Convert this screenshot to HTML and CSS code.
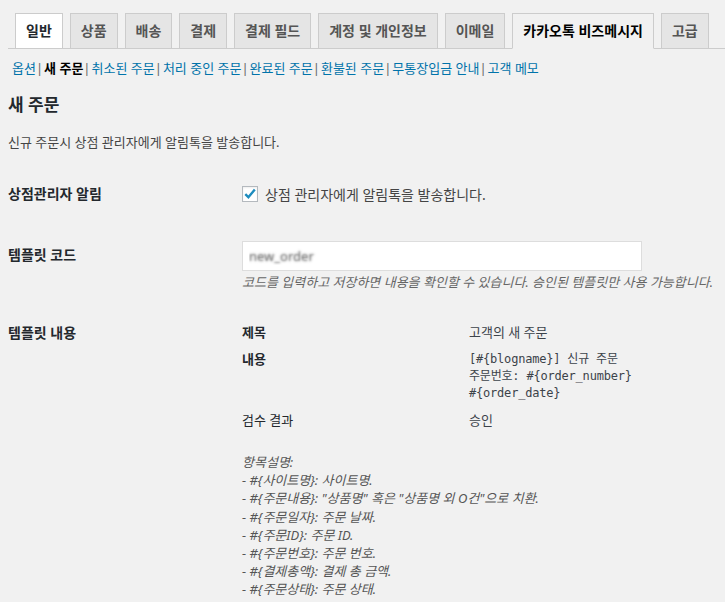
FILE: index.html
```html
<!DOCTYPE html>
<html lang="ko">
<head>
    <meta charset="UTF-8">
    <meta name="viewport" content="width=device-width, initial-scale=1.0">
    <title>카카오톡 비즈메시지 설정</title>
    <link rel="stylesheet" href="styles.css">
</head>
<body>
    <div class="wrap">

        <nav class="nav-tab-wrapper">
            <a href="#" class="nav-tab nav-tab-hover">일반</a>
            <a href="#" class="nav-tab">상품</a>
            <a href="#" class="nav-tab">배송</a>
            <a href="#" class="nav-tab">결제</a>
            <a href="#" class="nav-tab">결제 필드</a>
            <a href="#" class="nav-tab">계정 및 개인정보</a>
            <a href="#" class="nav-tab">이메일</a>
            <a href="#" class="nav-tab nav-tab-active">카카오톡 비즈메시지</a>
            <a href="#" class="nav-tab">고급</a>
        </nav>

        <ul class="subsubsub">
            <li><a href="#">옵션</a><span class="sep">|</span></li>
            <li><a href="#" class="current">새 주문</a><span class="sep">|</span></li>
            <li><a href="#">취소된 주문</a><span class="sep">|</span></li>
            <li><a href="#">처리 중인 주문</a><span class="sep">|</span></li>
            <li><a href="#">완료된 주문</a><span class="sep">|</span></li>
            <li><a href="#">환불된 주문</a><span class="sep">|</span></li>
            <li><a href="#">무통장입금 안내</a><span class="sep">|</span></li>
            <li><a href="#">고객 메모</a></li>
        </ul>

        <h2 class="section-title">새 주문</h2>
        <p class="section-desc">신규 주문시 상점 관리자에게 알림톡을 발송합니다.</p>

        <table class="form-table">
            <tr>
                <th>상점관리자 알림</th>
                <td class="td-check">
                    <label class="check-label">
                        <span class="checkbox">
                            <svg width="14" height="14" viewBox="0 0 14 14">
                                <path d="M2.3 7.2 L5.4 10.2 L11.8 2.6" fill="none" stroke="#1e8cbe" stroke-width="2.4"/>
                            </svg>
                        </span>
                        상점 관리자에게 알림톡을 발송합니다.
                    </label>
                </td>
            </tr>
            <tr>
                <th>템플릿 코드</th>
                <td class="td-input">
                    <input type="text" class="code-input" value="new_order">
                    <p class="field-desc">코드를 입력하고 저장하면 내용을 확인할 수 있습니다. 승인된 템플릿만 사용 가능합니다.</p>
                </td>
            </tr>
            <tr>
                <th>템플릿 내용</th>
                <td class="td-template">
                    <table class="template-table">
                        <tr>
                            <th>제목</th>
                            <td>고객의 새 주문</td>
                        </tr>
                        <tr>
                            <th>내용</th>
                            <td class="mono">[#{blogname}] 신규 주문<br>주문번호: #{order_number}<br>#{order_date}</td>
                        </tr>
                        <tr>
                            <td class="plain">검수 결과</td>
                            <td>승인</td>
                        </tr>
                    </table>
                    <p class="help-text">
                        항목설명:<br>
                        - #{사이트명}: 사이트명.<br>
                        - #{주문내용}: "상품명" 혹은 "상품명 외 O건"으로 치환.<br>
                        - #{주문일자}: 주문 날짜.<br>
                        - #{주문ID}: 주문 ID.<br>
                        - #{주문번호}: 주문 번호.<br>
                        - #{결제총액}: 결제 총 금액.<br>
                        - #{주문상태}: 주문 상태.
                    </p>
                </td>
            </tr>
        </table>

    </div>
</body>
</html>
```

FILE: styles.css
```css
body {
    margin: 0;
    background-color: #f1f1f1;
    color: #444;
    font-family: "Noto Sans", "Noto Sans CJK KR", sans-serif;
    font-size: 13px;
}

.wrap {
    padding-left: 8px;
}

/* tabs */
.nav-tab-wrapper {
    display: flex;
    padding-top: 13px;
    border-bottom: 1px solid #ccc;
}

.nav-tab {
    margin-left: 7px;
    margin-bottom: -1px;
    padding: 5px 10px;
    border: 1px solid #ccc;
    background-color: #e5e5e5;
    color: #555;
    font-size: 14px;
    font-weight: 700;
    line-height: 24px;
    text-decoration: none;
    white-space: nowrap;
}

.nav-tab-hover {
    background-color: #fff;
    color: #23282d;
}

.nav-tab-active {
    background-color: #f1f1f1;
    border-bottom-color: #f1f1f1;
    color: #000;
}

/* sub menu */
.subsubsub {
    display: flex;
    list-style: none;
    margin: 6px 0 0;
    padding: 0 0 0 4px;
    line-height: 26px;
    color: #666;
    white-space: nowrap;
}

.subsubsub .sep {
    margin: 0 1px 0 0;
}

.subsubsub a {
    color: #0073aa;
    text-decoration: none;
}

.subsubsub a.current {
    color: #000;
    font-weight: 700;
}

.section-title {
    margin: 13px 0 0;
    font-size: 17px;
    font-weight: 700;
    line-height: 22px;
    color: #23282d;
}

.section-desc {
    margin: 17px 0 0;
    line-height: 18px;
    color: #444;
}

/* form */
.form-table {
    margin-top: 14px;
    border-collapse: collapse;
}

.form-table > tbody > tr > th {
    width: 200px;
    padding: 20px 24px 20px 0;
    vertical-align: top;
    text-align: left;
    font-size: 14px;
    font-weight: 700;
    line-height: 18px;
    color: #23282d;
}

.form-table > tbody > tr > td {
    padding: 15px 10px;
    vertical-align: top;
}

.form-table > tbody > tr > td.td-check {
    padding: 20px 10px 23px;
}

.check-label {
    display: flex;
    align-items: center;
    gap: 7px;
    height: 18px;
    font-size: 14px;
    color: #444;
}

.checkbox {
    display: flex;
    align-items: center;
    justify-content: center;
    width: 14px;
    height: 14px;
    border: 1px solid #b4b9be;
    background-color: #fff;
    box-shadow: inset 0 1px 2px rgba(0, 0, 0, 0.07);
}

.form-table > tbody > tr > td.td-input {
    padding: 15px 10px 13px;
}

.code-input {
    display: block;
    box-sizing: border-box;
    width: 400px;
    height: 30px;
    margin: 0;
    padding: 0 6px;
    border: 1px solid #ddd;
    background-color: #fff;
    font-family: "Noto Sans", sans-serif;
    font-size: 13px;
    color: transparent;
    text-shadow: 0 0 2.5px #555;
    outline: none;
}

.field-desc {
    margin: 2px 0 0;
    font-style: italic;
    line-height: 18px;
    color: #666;
    white-space: nowrap;
}

.template-table {
    border-collapse: collapse;
}

.template-table th,
.template-table td {
    padding: 5px 0;
    vertical-align: top;
    text-align: left;
    line-height: 17px;
}

.template-table th,
.template-table td.plain {
    width: 227px;
    font-weight: 700;
    color: #23282d;
}

.template-table td.plain {
    font-weight: 400;
}

.template-table td {
    color: #3c434a;
}

.template-table td.mono {
    font-family: "DejaVu Sans Mono", "Noto Sans CJK KR", monospace;
    font-size: 12px;
    letter-spacing: -0.2px;
}

.help-text {
    margin: 19px 0 0;
    font-style: italic;
    line-height: 18.2px;
    color: #555;
}
```
